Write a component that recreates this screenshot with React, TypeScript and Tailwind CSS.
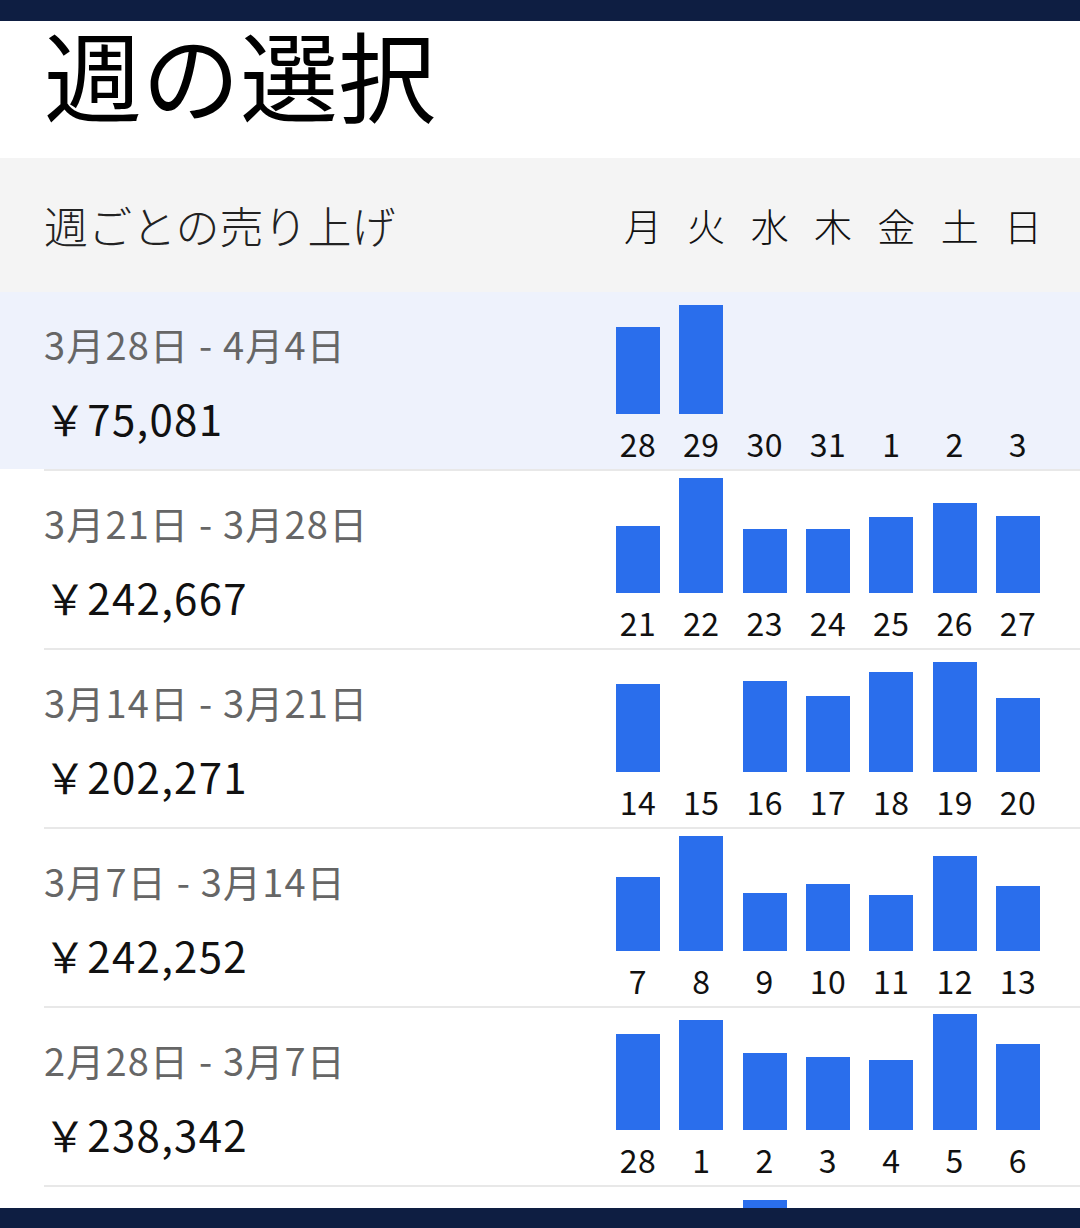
import React from 'react';

interface WeekRow {
  range: string;
  total: string;
  days: number[];
  values: number[];
  selected?: boolean;
}

const WEEKDAYS = ['月', '火', '水', '木', '金', '土', '日'];

const WEEKS: WeekRow[] = [
  { range: '3月28日 - 4月4日', total: '￥75,081', days: [28, 29, 30, 31, 1, 2, 3], values: [87, 109, 0, 0, 0, 0, 0], selected: true },
  { range: '3月21日 - 3月28日', total: '￥242,667', days: [21, 22, 23, 24, 25, 26, 27], values: [67, 115, 64, 64, 76, 90, 77] },
  { range: '3月14日 - 3月21日', total: '￥202,271', days: [14, 15, 16, 17, 18, 19, 20], values: [88, 0, 91, 76, 100, 110, 74] },
  { range: '3月7日 - 3月14日', total: '￥242,252', days: [7, 8, 9, 10, 11, 12, 13], values: [74, 115, 58, 67, 56, 95, 65] },
  { range: '2月28日 - 3月7日', total: '￥238,342', days: [28, 1, 2, 3, 4, 5, 6], values: [96, 110, 77, 73, 70, 116, 86] },
  { range: '2月21日 - 2月28日', total: '￥221,508', days: [21, 22, 23, 24, 25, 26, 27], values: [80, 70, 109, 60, 75, 90, 85] },
];

function WeekChart({ days, values }: { days: number[]; values: number[] }) {
  return (
    <div className="w-[424px] mr-[40px] shrink-0 flex flex-col">
      <div className="h-[122px] grid grid-cols-[repeat(7,44px)] gap-x-[19.33px] items-end">
        {values.map((v, i) => (
          <div key={i} className="w-[44px] bg-[#2a6eec]" style={{ height: `${v}px` }} />
        ))}
      </div>
      <div className="mt-[13px] grid grid-cols-[repeat(7,44px)] gap-x-[19.33px]">
        {days.map((d, i) => (
          <div key={i} className="text-center text-[32px] leading-[32px] tracking-[0.5px] text-[#111]">
            {d}
          </div>
        ))}
      </div>
    </div>
  );
}

function WeekItem({ week }: { week: WeekRow }) {
  return (
    <div className={`flex flex-col ${week.selected ? 'bg-[#eef2fc]' : 'bg-white'}`}>
      <div className="h-[177px] flex">
        <div className="flex-1 pl-[44px] pt-[32px] flex flex-col">
          <div className="text-[38px] leading-[39px] tracking-[1.2px] text-[#666666] whitespace-pre">{week.range}</div>
          <div className="mt-[34px] text-[42px] leading-[42px] tracking-[1.3px] text-[#111111]">{week.total}</div>
        </div>
        <WeekChart days={week.days} values={week.values} />
      </div>
      <div className="h-[2px] bg-white">
        <div className="h-[2px] ml-[44px] bg-[#e8e8e8]" />
      </div>
    </div>
  );
}

export default function App() {
  return (
    <div className="h-[1228px] w-[1080px] overflow-hidden flex flex-col bg-white font-['Noto_Sans_CJK_JP',sans-serif]">
      <div className="h-[21px] shrink-0 bg-[#0e1e42]" />

      <div className="flex-1 overflow-hidden">
        {/* タイトル */}
        <div className="h-[137px] pl-[44px] pt-[2px]">
          <h1 className="text-[98px] leading-[98px] text-black">週の選択</h1>
        </div>

        {/* ヘッダー */}
        <div className="h-[134px] bg-[#f4f4f4] flex items-center">
          <div className="flex-1 pl-[44px] text-[44px] leading-[44px] font-light text-[#222]">週ごとの売り上げ</div>
          <div className="w-[424px] mr-[40px] pl-[5px] grid grid-cols-[repeat(7,44px)] gap-x-[19.33px]">
            {WEEKDAYS.map((w) => (
              <div key={w} className="text-center text-[38px] leading-[38px] font-light text-[#111]">
                {w}
              </div>
            ))}
          </div>
        </div>

        {WEEKS.map((week) => (
          <WeekItem key={week.range} week={week} />
        ))}
      </div>

      <div className="h-[20px] shrink-0 bg-[#0e1e42]" />
    </div>
  );
}
